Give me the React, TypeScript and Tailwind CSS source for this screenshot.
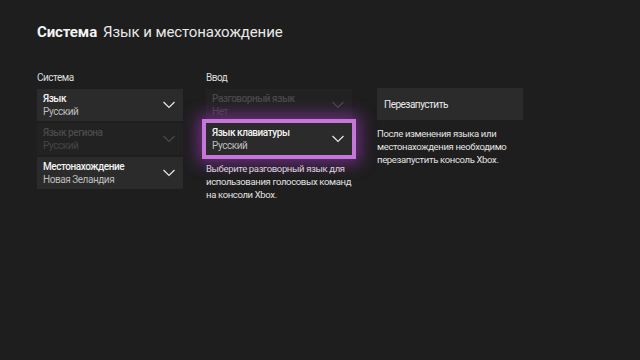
import React from "react";

const Chevron = ({ dim = false }: { dim?: boolean }) => (
  <svg width="14" height="8" viewBox="0 0 14 8" className="shrink-0">
    <path d="M1.5 1 L7 6.5 L12.5 1" fill="none" stroke={dim ? "#484848" : "#e8e8e8"} strokeWidth="1.2" />
  </svg>
);

const Select = ({
  title,
  value,
  disabled = false,
}: {
  title: string;
  value: string;
  disabled?: boolean;
}) => (
  <div
    className={`h-[32px] w-[146px] flex items-center justify-between pl-[6px] pr-[7px] ${
      disabled ? "bg-[#222222]" : "bg-[#2b2b2b]"
    }`}
  >
    <div className="flex flex-col leading-[13px] tracking-[-0.45px]">
      <span className={`text-[10px] font-medium ${disabled ? "text-[#4a4a4a]" : "text-[#f2f2f2]"}`}>{title}</span>
      <span className={`text-[10px] ${disabled ? "text-[#464646]" : "text-[#bdbdbd]"}`}>{value}</span>
    </div>
    <Chevron dim={disabled} />
  </div>
);

export default function App() {
  return (
    <div
      className="w-[640px] h-[360px] bg-[#1e1e1e] text-white overflow-hidden pl-[37px] pt-[21px]"
      style={{ fontFamily: 'Roboto, "Noto Sans", sans-serif' }}
    >
      <div className="flex items-baseline gap-[6px] h-[22px] leading-[22px]">
        <span className="text-[15px] font-bold text-[#f4f4f4] tracking-[-0.1px]">Система</span>
        <span className="text-[15px] text-[#e8e8e8] tracking-[-0.1px]">Язык и местонахождение</span>
      </div>

      <div className="flex mt-[28px] tracking-[-0.5px]">
        {/* Column 1 */}
        <div className="w-[146px] flex flex-col">
          <div className="h-[14px] leading-[14px] text-[10px] text-[#dcdcdc] mb-[4px]">Система</div>
          <div className="flex flex-col gap-[2px]">
            <Select title="Язык" value="Русский" />
            <Select title="Язык региона" value="Русский" disabled />
            <Select title="Местонахождение" value="Новая Зеландия" />
          </div>
        </div>

        {/* Column 2 */}
        <div className="w-[146px] ml-[23px] flex flex-col">
          <div className="h-[14px] leading-[14px] text-[10px] text-[#dcdcdc] mb-[4px]">Ввод</div>
          <div className="flex flex-col gap-[2px]">
            <Select title="Разговорный язык" value="Нет" disabled />
            <div className="outline-[4px] outline-solid outline-[#c676d8] shadow-[0_0_16px_8px_rgba(160,55,195,0.6)] relative">
              <Select title="Язык клавиатуры" value="Русский" />
            </div>
          </div>
          <p className="mt-[7px] text-[9.5px] tracking-[-0.35px] leading-[13px] text-[#e2e2e2]">
            Выберите разговорный язык для использования голосовых команд на консоли Xbox.
          </p>
        </div>

        {/* Column 3 */}
        <div className="w-[146px] ml-[25px] flex flex-col">
          <div className="h-[14px] mb-[3px]" />
          <div className="h-[32px] bg-[#2b2b2b] flex items-center pl-[7px] text-[10px] text-[#eaeaea]">
            Перезапустить
          </div>
          <p className="mt-[7px] text-[9.5px] tracking-[-0.35px] leading-[13px] text-[#e2e2e2]">
            После изменения языка или местонахождения необходимо перезапустить консоль Xbox.
          </p>
        </div>
      </div>
    </div>
  );
}
